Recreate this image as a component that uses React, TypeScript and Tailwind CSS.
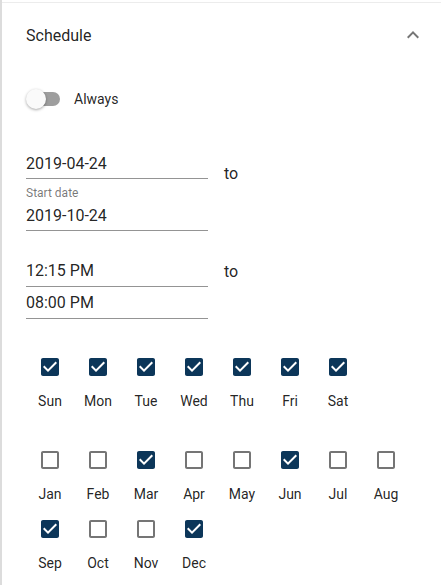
import React from "react";

const CheckedIcon = () => (
  <svg width="24" height="24" viewBox="0 0 24 24" className="block">
    <path
      fill="#0c3659"
      d="M19 3H5c-1.11 0-2 .9-2 2v14c0 1.1.89 2 2 2h14c1.11 0 2-.9 2-2V5c0-1.1-.89-2-2-2zm-9 14l-5-5 1.41-1.41L10 14.17l7.59-7.59L19 8l-9 9z"
    />
  </svg>
);

const UncheckedIcon = () => (
  <svg width="24" height="24" viewBox="0 0 24 24" className="block">
    <path
      fill="#757575"
      d="M19 5v14H5V5h14m0-2H5c-1.1 0-2 .9-2 2v14c0 1.1.9 2 2 2h14c1.1 0 2-.9 2-2V5c0-1.1-.9-2-2-2z"
    />
  </svg>
);

const Item = ({ label, checked }: { label: string; checked: boolean }) => (
  <div className="w-[48px] flex flex-col items-center">
    {checked ? <CheckedIcon /> : <UncheckedIcon />}
    <div className="mt-[12px] h-[20px] leading-[20px] text-[14px] text-[rgba(0,0,0,0.87)]">{label}</div>
  </div>
);

const DateField = ({ value }: { value: string }) => (
  <div className="h-[32px] box-border pt-[7px] border-b border-[#949494] text-[16px] leading-[19px] text-[rgba(0,0,0,0.87)]">
    {value}
  </div>
);

const TimeField = ({ value }: { value: string }) => (
  <div className="h-[32px] box-border pt-[6px] border-b border-[#949494] text-[16px] leading-[19px] text-[rgba(0,0,0,0.87)]">
    {value}
  </div>
);

const days: [string, boolean][] = [
  ["Sun", true],
  ["Mon", true],
  ["Tue", true],
  ["Wed", true],
  ["Thu", true],
  ["Fri", true],
  ["Sat", true],
];

const months: [string, boolean][] = [
  ["Jan", false],
  ["Feb", false],
  ["Mar", true],
  ["Apr", false],
  ["May", false],
  ["Jun", true],
  ["Jul", false],
  ["Aug", false],
  ["Sep", true],
  ["Oct", false],
  ["Nov", false],
  ["Dec", true],
];

export default function App() {
  return (
    <div
      className="min-h-screen bg-white border-l-2 border-[#dcdcdc]"
      style={{ fontFamily: "Roboto, 'Noto Sans', sans-serif" }}
    >
      <div className="pt-[2px]">
        <div className="border-t border-[#ececec] min-h-[582px]">
          {/* header */}
          <div className="h-[64px] flex items-center justify-between pl-[24px] pr-[16px]">
            <div className="text-[16px] leading-[19px] text-[rgba(0,0,0,0.87)]">Schedule</div>
            <svg width="24" height="24" viewBox="0 0 24 24" className="block">
              <path fill="rgba(0,0,0,0.54)" d="M12 8l-6 6 1.41 1.41L12 10.83l4.59 4.58L18 14z" />
            </svg>
          </div>

          <div className="pl-[24px]">
            {/* toggle */}
            <div className="mt-[20px] h-[24px] flex items-center">
              <div className="relative w-[36px] h-[20px]">
                <div className="absolute left-[2px] top-[3px] w-[32px] h-[14px] rounded-full bg-[#9e9e9e]" />
                <div className="absolute left-0 top-0 w-[20px] h-[20px] rounded-full bg-[#fafafa] shadow-[0_1px_3px_rgba(0,0,0,0.35)]" />
              </div>
              <div className="ml-[12px] text-[14px] leading-[20px] text-[rgba(0,0,0,0.87)]">Always</div>
            </div>

            {/* dates */}
            <div className="mt-[36px] flex items-start">
              <div className="w-[182px]">
                <DateField value="2019-04-24" />
                <div className="mt-[8px] h-[12px] leading-[12px] text-[12px] text-[rgba(0,0,0,0.54)]">Start date</div>
                <DateField value="2019-10-24" />
              </div>
              <div className="ml-[16px] mt-[17px] text-[16px] leading-[19px] text-[rgba(0,0,0,0.87)]">to</div>
            </div>

            {/* times */}
            <div className="mt-[24px] flex items-start">
              <div className="w-[182px]">
                <TimeField value="12:15 PM" />
                <TimeField value="08:00 PM" />
              </div>
              <div className="ml-[16px] mt-[7px] text-[16px] leading-[19px] text-[rgba(0,0,0,0.87)]">to</div>
            </div>

            {/* days */}
            <div className="mt-[36px] flex">
              {days.map(([l, c]) => (
                <Item key={l} label={l} checked={c} />
              ))}
            </div>

            {/* months */}
            <div className="mt-[37px] grid grid-cols-[repeat(8,48px)] gap-y-[13px]">
              {months.map(([l, c]) => (
                <Item key={l} label={l} checked={c} />
              ))}
            </div>
          </div>
        </div>
      </div>
    </div>
  );
}
